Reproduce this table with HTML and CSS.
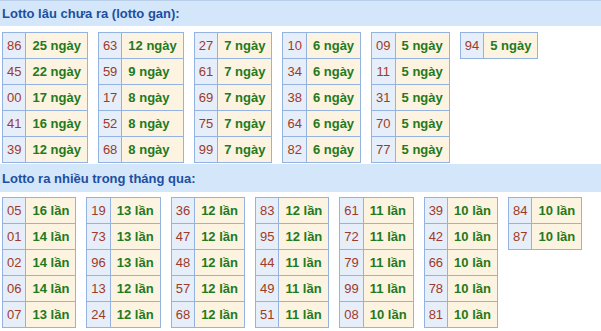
FILE: index.html
```html
<!DOCTYPE html>
<html lang="vi">
<head>
<meta charset="utf-8">
<title>Lotto</title>
<link rel="stylesheet" href="styles.css">
</head>
<body>
<div class="sec sec-first">
  <div class="hdr">Lotto lâu chưa ra (lotto gan):</div>
  <div class="tables">
    <table class="lt"><tr><td class="n">86</td><td class="v">25 ngày</td></tr><tr><td class="n">45</td><td class="v">22 ngày</td></tr><tr><td class="n">00</td><td class="v">17 ngày</td></tr><tr><td class="n">41</td><td class="v">16 ngày</td></tr><tr><td class="n">39</td><td class="v">12 ngày</td></tr></table>
    <table class="lt"><tr><td class="n">63</td><td class="v">12 ngày</td></tr><tr><td class="n">59</td><td class="v">9 ngày</td></tr><tr><td class="n">17</td><td class="v">8 ngày</td></tr><tr><td class="n">52</td><td class="v">8 ngày</td></tr><tr><td class="n">68</td><td class="v">8 ngày</td></tr></table>
    <table class="lt"><tr><td class="n">27</td><td class="v">7 ngày</td></tr><tr><td class="n">61</td><td class="v">7 ngày</td></tr><tr><td class="n">69</td><td class="v">7 ngày</td></tr><tr><td class="n">75</td><td class="v">7 ngày</td></tr><tr><td class="n">99</td><td class="v">7 ngày</td></tr></table>
    <table class="lt"><tr><td class="n">10</td><td class="v">6 ngày</td></tr><tr><td class="n">34</td><td class="v">6 ngày</td></tr><tr><td class="n">38</td><td class="v">6 ngày</td></tr><tr><td class="n">64</td><td class="v">6 ngày</td></tr><tr><td class="n">82</td><td class="v">6 ngày</td></tr></table>
    <table class="lt"><tr><td class="n">09</td><td class="v">5 ngày</td></tr><tr><td class="n">11</td><td class="v">5 ngày</td></tr><tr><td class="n">31</td><td class="v">5 ngày</td></tr><tr><td class="n">70</td><td class="v">5 ngày</td></tr><tr><td class="n">77</td><td class="v">5 ngày</td></tr></table>
    <table class="lt"><tr><td class="n">94</td><td class="v">5 ngày</td></tr></table>
  </div>
</div>
<div class="sec sec-second">
  <div class="hdr">Lotto ra nhiều trong tháng qua:</div>
  <div class="tables">
    <table class="lt"><tr><td class="n">05</td><td class="v">16 lần</td></tr><tr><td class="n">01</td><td class="v">14 lần</td></tr><tr><td class="n">02</td><td class="v">14 lần</td></tr><tr><td class="n">06</td><td class="v">14 lần</td></tr><tr><td class="n">07</td><td class="v">13 lần</td></tr></table>
    <table class="lt"><tr><td class="n">19</td><td class="v">13 lần</td></tr><tr><td class="n">73</td><td class="v">13 lần</td></tr><tr><td class="n">96</td><td class="v">13 lần</td></tr><tr><td class="n">13</td><td class="v">12 lần</td></tr><tr><td class="n">24</td><td class="v">12 lần</td></tr></table>
    <table class="lt"><tr><td class="n">36</td><td class="v">12 lần</td></tr><tr><td class="n">47</td><td class="v">12 lần</td></tr><tr><td class="n">48</td><td class="v">12 lần</td></tr><tr><td class="n">57</td><td class="v">12 lần</td></tr><tr><td class="n">68</td><td class="v">12 lần</td></tr></table>
    <table class="lt"><tr><td class="n">83</td><td class="v">12 lần</td></tr><tr><td class="n">95</td><td class="v">12 lần</td></tr><tr><td class="n">44</td><td class="v">11 lần</td></tr><tr><td class="n">49</td><td class="v">11 lần</td></tr><tr><td class="n">51</td><td class="v">11 lần</td></tr></table>
    <table class="lt"><tr><td class="n">61</td><td class="v">11 lần</td></tr><tr><td class="n">72</td><td class="v">11 lần</td></tr><tr><td class="n">79</td><td class="v">11 lần</td></tr><tr><td class="n">99</td><td class="v">11 lần</td></tr><tr><td class="n">08</td><td class="v">10 lần</td></tr></table>
    <table class="lt"><tr><td class="n">39</td><td class="v">10 lần</td></tr><tr><td class="n">42</td><td class="v">10 lần</td></tr><tr><td class="n">66</td><td class="v">10 lần</td></tr><tr><td class="n">78</td><td class="v">10 lần</td></tr><tr><td class="n">81</td><td class="v">10 lần</td></tr></table>
    <table class="lt"><tr><td class="n">84</td><td class="v">10 lần</td></tr><tr><td class="n">87</td><td class="v">10 lần</td></tr></table>
  </div>
</div>
</body>
</html>
```
FILE: styles.css
```css
html, body {
  margin: 0;
  padding: 0;
  background: #ffffff;
  font-family: "Liberation Sans", Arial, sans-serif;
}
.hdr {
  background: #d4e6fa;
  color: #1d4fa0;
  font-weight: bold;
  font-size: 13px;
  padding-left: 2px;
}
.sec-first .hdr {
  border-top: 1px solid #b9cfea;
  height: 25px;
  line-height: 25px;
}
.sec-second .hdr {
  height: 28px;
  line-height: 29px;
}
.tables {
  display: flex;
  flex-wrap: wrap;
  align-items: flex-start;
  gap: 10px;
  padding: 6px 2px 1px;
}
.sec-second .tables {
  padding-top: 5px;
}
.lt {
  border-collapse: collapse;
  font-size: 13px;
}
.lt td {
  border: 1px solid #94b3e0;
  height: 25px;
  padding: 0;
  white-space: nowrap;
}
.lt .n {
  background: #e6eefa;
  color: #9e3a28;
  text-align: center;
  padding: 0 4px;
}
.lt .v {
  background: #fdf3e1;
  color: #237a1c;
  font-weight: bold;
  padding: 0 6px;
}
```
